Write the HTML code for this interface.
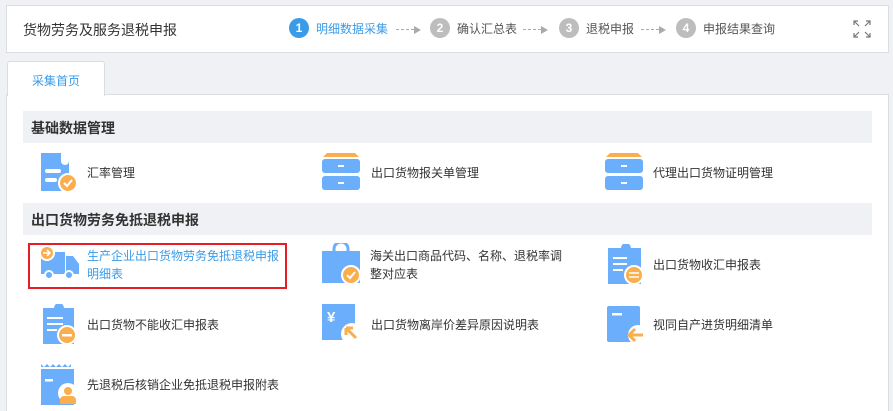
<!DOCTYPE html>
<html><head><meta charset="utf-8"><style>
*{margin:0;padding:0;box-sizing:border-box}
html,body{width:893px;height:411px;overflow:hidden}
body{background:#f0f1f5;font-family:"Liberation Sans","Noto Sans CJK SC",sans-serif;color:#333;position:relative}
.a{position:absolute}
.hdr{left:6px;top:5px;width:883px;height:48px;background:#fff;border:1px solid #dcdde2}
.title{left:23px;top:20px;font-size:14px;color:#333}
.step{top:18px;font-size:12px;color:#555;display:flex;align-items:center;height:20px}
.c{width:20px;height:20px;border-radius:50%;background:#bdbdbd;color:#fff;font-size:12px;text-align:center;line-height:20px;font-weight:bold}
.arr{top:27px;width:25px;height:6px}
.arr i{position:absolute;left:0;top:2px;width:18px;border-top:1px dashed #aaa}
.arr b{position:absolute;right:0;top:-1px;border-left:7px solid #aaa;border-top:4px solid transparent;border-bottom:4px solid transparent}
.tab{left:7px;top:61px;width:98px;height:35px;background:#fff;border:1px solid #dcdde2;border-bottom:none;border-radius:3px 3px 0 0;color:#3a9be8;font-size:12px;padding:10px 0 0 24px;z-index:2}
.panel{left:6px;top:94px;width:883px;height:320px;background:#fff;border:1px solid #dcdde2}
.sec{left:23px;width:849px;height:32px;background:#f0f1f5;font-size:14px;font-weight:bold;color:#333;padding:7px 0 0 8px}
.t{font-size:12px;color:#333;line-height:18px}
.red{left:28px;top:243px;width:259px;height:46px;border:2px solid #e81c24}
</style></head><body>
<div class="a hdr"></div>
<div class="a title">货物劳务及服务退税申报</div>
<div class="a step" style="left:289px"><span class="c" style="background:#3a9be8">1</span></div>
<div class="a step" style="left:316px;color:#3a9be8">明细数据采集</div>
<div class="a arr" style="left:396px"><i></i><b></b></div>
<div class="a step" style="left:430px"><span class="c">2</span></div>
<div class="a step" style="left:457px">确认汇总表</div>
<div class="a arr" style="left:523px"><i></i><b></b></div>
<div class="a step" style="left:559px"><span class="c">3</span></div>
<div class="a step" style="left:586px">退税申报</div>
<div class="a arr" style="left:641px"><i></i><b></b></div>
<div class="a step" style="left:676px"><span class="c">4</span></div>
<div class="a step" style="left:703px">申报结果查询</div>
<svg class="a" style="left:853px;top:20px" width="18" height="18" viewBox="0 0 18 18" fill="none" stroke="#777" stroke-width="1.2"><path d="M1 5V1h4M1 1l5 5M13 1h4v4M17 1l-5 5M1 13v4h4M1 17l5-5M17 13v4h-4M17 17l-5-5"/></svg>
<div class="a panel"></div>
<div class="a tab">采集首页</div>
<div class="a sec" style="top:111px">基础数据管理</div>
<div class="a sec" style="top:203px">出口货物劳务免抵退税申报</div>

<svg class="a" style="left:40px;top:151px" width="38" height="42" viewBox="0 0 38 42"><path d="M1 2h20v8a4 4 0 0 0 8 0V2v38H1z" fill="#6aaefc"/><rect x="5" y="18" width="16" height="4" rx="2" fill="#fff"/><rect x="5" y="27" width="12" height="4" rx="2" fill="#fff"/><circle cx="28" cy="32" r="9" fill="#fbae4e" stroke="#fff" stroke-width="2"/><path d="M24 32l3 3 5-6" stroke="#fff" stroke-width="2" fill="none"/></svg>
<div class="a t" style="left:87px;top:164px">汇率管理</div>
<svg class="a" style="left:322px;top:152px" width="38" height="38" viewBox="0 0 38 38"><path d="M5 1h28l4 4H1z" fill="#fbae4e"/><rect x="0" y="7" width="38" height="14" rx="3" fill="#6aaefc"/><rect x="0" y="24" width="38" height="14" rx="3" fill="#6aaefc"/><rect x="16" y="13" width="6" height="2" fill="#fff"/><rect x="16" y="30" width="6" height="2" fill="#fff"/></svg>
<div class="a t" style="left:371px;top:164px">出口货物报关单管理</div>
<svg class="a" style="left:605px;top:152px" width="38" height="38" viewBox="0 0 38 38"><path d="M5 1h28l4 4H1z" fill="#fbae4e"/><rect x="0" y="7" width="38" height="14" rx="3" fill="#6aaefc"/><rect x="0" y="24" width="38" height="14" rx="3" fill="#6aaefc"/><rect x="16" y="13" width="6" height="2" fill="#fff"/><rect x="16" y="30" width="6" height="2" fill="#fff"/></svg>
<div class="a t" style="left:653px;top:164px">代理出口货物证明管理</div>

<div class="a red"></div>
<svg class="a" style="left:38px;top:244px" width="42" height="38" viewBox="0 0 42 38"><rect x="3" y="8" width="24" height="22" fill="#6aaefc"/><path d="M28 12h7l6 8v10H28z" fill="#6aaefc"/><circle cx="11" cy="31" r="4" fill="#6aaefc" stroke="#fff" stroke-width="2"/><circle cx="31" cy="31" r="4" fill="#6aaefc" stroke="#fff" stroke-width="2"/><circle cx="9" cy="9" r="7" fill="#fbae4e" stroke="#fff" stroke-width="2"/><path d="M5 9h7M9 6l3 3-3 3" stroke="#fff" stroke-width="1.5" fill="none"/></svg>
<div class="a t" style="left:87px;top:247px;color:#3a9be8">生产企业出口货物劳务免抵退税申报<br>明细表</div>
<svg class="a" style="left:322px;top:243px" width="40" height="42" viewBox="0 0 40 42"><rect x="0" y="8" width="38" height="32" fill="#6aaefc"/><path d="M12 10V6a7 7 0 0 1 14 0v4" stroke="#6aaefc" stroke-width="3" fill="none"/><circle cx="29" cy="32" r="9" fill="#fbae4e" stroke="#fff" stroke-width="2"/><path d="M25 32l3 3 5-6" stroke="#fff" stroke-width="2" fill="none"/></svg>
<div class="a t" style="left:370px;top:247px">海关出口商品代码、名称、退税率调<br>整对应表</div>
<svg class="a" style="left:608px;top:244px" width="36" height="40" viewBox="0 0 36 40"><path d="M0 4h13a5 5 0 0 1 10 0h10v36H0z" fill="#6aaefc"/><rect x="5" y="13" width="14" height="2" fill="#fff"/><rect x="5" y="19" width="14" height="2" fill="#fff"/><rect x="5" y="25" width="10" height="2" fill="#fff"/><circle cx="26" cy="31" r="9" fill="#fbae4e" stroke="#fff" stroke-width="2"/><path d="M21 29h10M21 33h10" stroke="#fff" stroke-width="1.6"/></svg>
<div class="a t" style="left:653px;top:256px">出口货物收汇申报表</div>

<svg class="a" style="left:42px;top:304px" width="36" height="40" viewBox="0 0 36 40"><path d="M1 4h11a5 5 0 0 1 10 0h10v36H1z" fill="#6aaefc"/><rect x="5" y="13" width="16" height="2" fill="#fff"/><rect x="5" y="19" width="16" height="2" fill="#fff"/><rect x="5" y="25" width="10" height="2" fill="#fff"/><circle cx="25" cy="31" r="9" fill="#fbae4e" stroke="#fff" stroke-width="2"/><rect x="20" y="30" width="10" height="2.5" fill="#fff"/></svg>
<div class="a t" style="left:87px;top:316px">出口货物不能收汇申报表</div>
<svg class="a" style="left:322px;top:304px" width="40" height="40" viewBox="0 0 40 40"><rect x="0" y="0" width="33" height="36" fill="#6aaefc"/><text x="5" y="18" fill="#fff" font-size="15" font-weight="bold" font-family="Liberation Sans">¥</text><circle cx="30" cy="30" r="11" fill="#fff"/><path d="M24 24l10 10M24 24h7M24 24v7" stroke="#fbae4e" stroke-width="3" fill="none"/></svg>
<div class="a t" style="left:371px;top:316px">出口货物离岸价差异原因说明表</div>
<svg class="a" style="left:607px;top:306px" width="38" height="38" viewBox="0 0 38 38"><rect x="0" y="0" width="33" height="36" rx="2" fill="#6aaefc"/><rect x="5" y="7" width="10" height="2.5" fill="#fff"/><circle cx="31" cy="29" r="10" fill="#fff"/><path d="M36 29H22M28 23l-6 6 6 6" stroke="#fbae4e" stroke-width="3" fill="none"/></svg>
<div class="a t" style="left:653px;top:316px">视同自产进货明细清单</div>

<svg class="a" style="left:40px;top:363px" width="38" height="42" viewBox="0 0 38 42"><path d="M1 1l3 3 3-3 3 3 3-3 3 3 3-3 3 3 3-3 3 3 3-3v3H1z" fill="#6aaefc"/><rect x="1" y="6" width="33" height="36" fill="#6aaefc"/><rect x="5" y="16" width="8" height="2.5" fill="#fff"/><circle cx="28" cy="30" r="10" fill="#fff"/><circle cx="28" cy="28" r="4" fill="#fbae4e"/><path d="M20 41v-4a4 4 0 0 1 4-4h8a4 4 0 0 1 4 4v4z" fill="#fbae4e"/></svg>
<div class="a t" style="left:87px;top:376px">先退税后核销企业免抵退税申报附表</div>
</body></html>
